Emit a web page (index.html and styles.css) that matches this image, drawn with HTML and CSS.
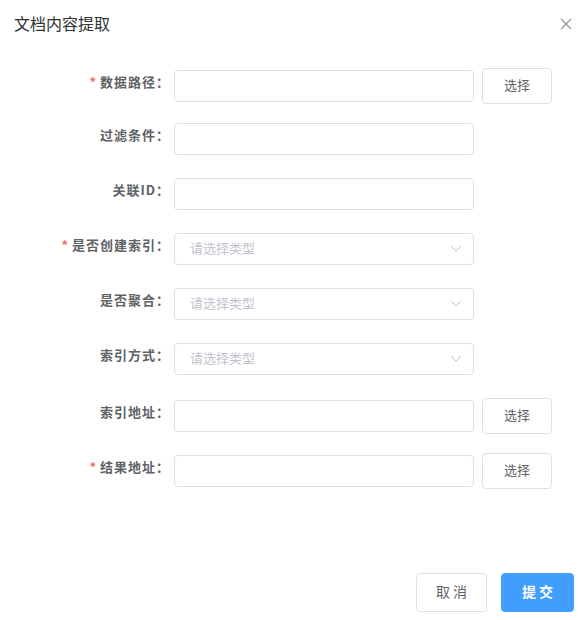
FILE: index.html
```html
<!DOCTYPE html>
<html lang="zh-CN">
<head>
    <meta charset="UTF-8">
    <title>文档内容提取</title>
    <link rel="stylesheet" href="styles.css">
</head>
<body>
    <div class="dialog">
        <div class="dialog-header">
            <span class="dialog-title">文档内容提取</span>
            <button class="dialog-close" aria-label="关闭">
                <svg width="12" height="12" viewBox="0 0 12 12"><path d="M1 1L11 11M11 1L1 11" stroke="#909399" stroke-width="1.2" fill="none"/></svg>
            </button>
        </div>

        <div class="dialog-body">
            <div class="form-item with-btn">
                <label class="form-label required">数据路径：</label>
                <input class="form-input" type="text">
                <button class="btn btn-small">选择</button>
            </div>
            <div class="form-item">
                <label class="form-label">过滤条件：</label>
                <input class="form-input" type="text">
            </div>
            <div class="form-item">
                <label class="form-label">关联ID：</label>
                <input class="form-input" type="text">
            </div>
            <div class="form-item">
                <label class="form-label required">是否创建索引：</label>
                <div class="form-select">
                    <span class="placeholder">请选择类型</span>
                    <svg class="arrow" width="12" height="7" viewBox="0 0 12 7"><path d="M1 1L6 6L11 1" stroke="#c0c4cc" stroke-width="1" fill="none"/></svg>
                </div>
            </div>
            <div class="form-item">
                <label class="form-label">是否聚合：</label>
                <div class="form-select">
                    <span class="placeholder">请选择类型</span>
                    <svg class="arrow" width="12" height="7" viewBox="0 0 12 7"><path d="M1 1L6 6L11 1" stroke="#c0c4cc" stroke-width="1" fill="none"/></svg>
                </div>
            </div>
            <div class="form-item">
                <label class="form-label">索引方式：</label>
                <div class="form-select">
                    <span class="placeholder">请选择类型</span>
                    <svg class="arrow" width="12" height="7" viewBox="0 0 12 7"><path d="M1 1L6 6L11 1" stroke="#c0c4cc" stroke-width="1" fill="none"/></svg>
                </div>
            </div>
            <div class="form-item with-btn">
                <label class="form-label">索引地址：</label>
                <input class="form-input" type="text">
                <button class="btn btn-small">选择</button>
            </div>
            <div class="form-item with-btn">
                <label class="form-label required">结果地址：</label>
                <input class="form-input" type="text">
                <button class="btn btn-small">选择</button>
            </div>
        </div>

        <div class="dialog-footer">
            <button class="btn btn-large">取 消</button>
            <button class="btn btn-large btn-primary">提 交</button>
        </div>
    </div>
</body>
</html>
```

FILE: styles.css
```css
body {
    margin: 0;
    background-color: #fff;
    font-family: "Noto Sans CJK SC", "Liberation Sans", sans-serif;
    color: #606266;
}

.dialog {
    width: 584px;
    height: 620px;
    display: flex;
    flex-direction: column;
    box-sizing: border-box;
}

.dialog-header {
    display: flex;
    align-items: center;
    justify-content: space-between;
    height: 24px;
    padding: 12px 12px 0 14px;
}

.dialog-title {
    font-size: 16px;
    color: #303133;
    line-height: 24px;
    padding-bottom: 2px;
}

.dialog-close {
    border: none;
    background: none;
    padding: 0;
    width: 12px;
    height: 12px;
    display: flex;
}

.dialog-body {
    padding-top: 32px;
}

.form-item {
    display: flex;
    align-items: center;
    height: 32px;
    margin-bottom: 23px;
}

.form-item.with-btn {
    height: 36px;
    margin-bottom: 19px;
}

.form-label {
    width: 156px;
    padding: 0 4px 9px 0;
    text-align: right;
    font-size: 13px;
    font-weight: bold;
    letter-spacing: 1px;
    color: #606266;
    flex-shrink: 0;
    margin-left: 14px;
}

.form-label.required::before {
    content: "*";
    color: #f56c6c;
    margin-right: 3px;
}

.form-input,
.form-select {
    width: 300px;
    height: 32px;
    box-sizing: border-box;
    border: 1px solid #dcdfe6;
    border-radius: 4px;
    background: #fff;
    font-size: 13px;
    outline: none;
    padding: 0 15px;
}

.form-select {
    display: flex;
    align-items: center;
    justify-content: space-between;
    padding-right: 11px;
}

.placeholder {
    color: #c0c4cc;
    font-size: 13px;
    padding-bottom: 4px;
}

.arrow {
    margin-bottom: 2px;
}

.btn {
    font-family: inherit;
    border: 1px solid #dcdfe6;
    border-radius: 4px;
    background: #fff;
    color: #606266;
    cursor: pointer;
    box-sizing: border-box;
    padding: 0 0 3px;
}

.btn-small {
    width: 70px;
    height: 36px;
    margin-left: 8px;
    font-size: 13px;
}

.dialog-footer {
    margin-top: auto;
    display: flex;
    justify-content: flex-end;
    gap: 14px;
    padding: 0 10px 8px 0;
}

.btn-large {
    width: 71px;
    height: 39px;
    font-size: 14px;
}

.btn-primary {
    width: 73px;
    background: #409eff;
    border-color: #409eff;
    color: #fff;
    font-weight: bold;
}
```
